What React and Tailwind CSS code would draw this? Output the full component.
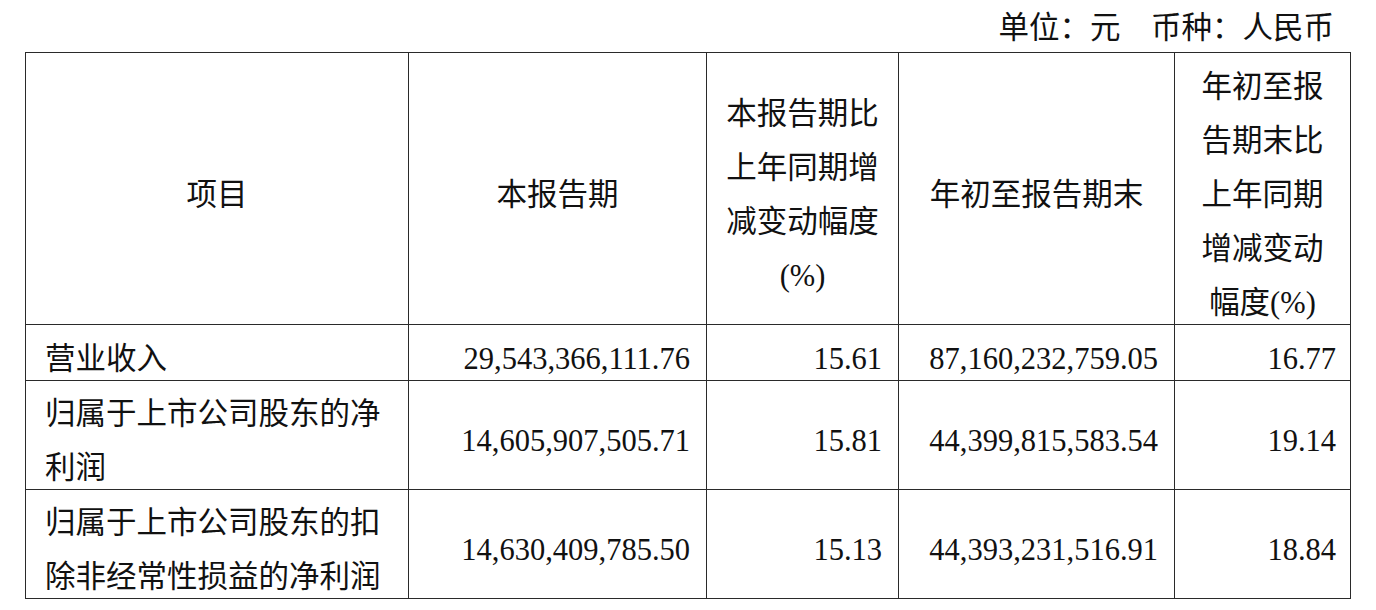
import React from 'react';

const FONT = "font-['Liberation_Serif','Noto_Sans_CJK_SC',serif]";

const ROWS = [
  { name: ['营业收入'], cur: '29,543,366,111.76', curPct: '15.61', ytd: '87,160,232,759.05', ytdPct: '16.77', h: 'h-[56px]' },
  { name: ['归属于上市公司股东的净', '利润'], cur: '14,605,907,505.71', curPct: '15.81', ytd: '44,399,815,583.54', ytdPct: '19.14', h: 'h-[109px]' },
  { name: ['归属于上市公司股东的扣', '除非经常性损益的净利润'], cur: '14,630,409,785.50', curPct: '15.13', ytd: '44,393,231,516.91', ytdPct: '18.84', h: 'h-[109px]' },
];

function Lines({ lines }) {
  return (
    <span className="inline-block translate-y-[6px]">
      {lines.map((l, i) => (
        <React.Fragment key={i}>
          {i > 0 && <br />}
          {l}
        </React.Fragment>
      ))}
    </span>
  );
}

export default function App() {
  const cell = 'border border-[#2a2a2a] p-0 align-middle';
  return (
    <div className={`w-[1376px] h-[610px] bg-white text-[#111] ${FONT} text-[30.5px] leading-[54px]`}>
      <div className="h-[52px] flex items-center justify-end pr-[42px] leading-none pt-[4px]">
        单位：元　币种：人民币
      </div>
      <table className="ml-[25px] table-fixed border-collapse w-[1325px]">
        <colgroup>
          <col className="w-[383px]" />
          <col className="w-[298px]" />
          <col className="w-[192px]" />
          <col className="w-[276px]" />
          <col className="w-[176px]" />
        </colgroup>
        <thead>
          <tr className="h-[272px]">
            <th className={`${cell} font-normal text-center`}><Lines lines={['项目']} /></th>
            <th className={`${cell} font-normal text-center`}><Lines lines={['本报告期']} /></th>
            <th className={`${cell} font-normal text-center`}>
              <Lines lines={['本报告期比', '上年同期增', '减变动幅度', '(%)']} />
            </th>
            <th className={`${cell} font-normal text-center`}><Lines lines={['年初至报告期末']} /></th>
            <th className={`${cell} font-normal text-center`}>
              <Lines lines={['年初至报', '告期末比', '上年同期', '增减变动', '幅度(%)']} />
            </th>
          </tr>
        </thead>
        <tbody>
          {ROWS.map((r, i) => (
            <tr key={i} className={r.h}>
              <td className={`${cell} text-left pl-[19px] whitespace-nowrap`}><Lines lines={r.name} /></td>
              <td className={`${cell} text-right pr-[16px]`}><Lines lines={[r.cur]} /></td>
              <td className={`${cell} text-right pr-[16px]`}><Lines lines={[r.curPct]} /></td>
              <td className={`${cell} text-right pr-[16px]`}><Lines lines={[r.ytd]} /></td>
              <td className={`${cell} text-right pr-[14px]`}><Lines lines={[r.ytdPct]} /></td>
            </tr>
          ))}
        </tbody>
      </table>
    </div>
  );
}
